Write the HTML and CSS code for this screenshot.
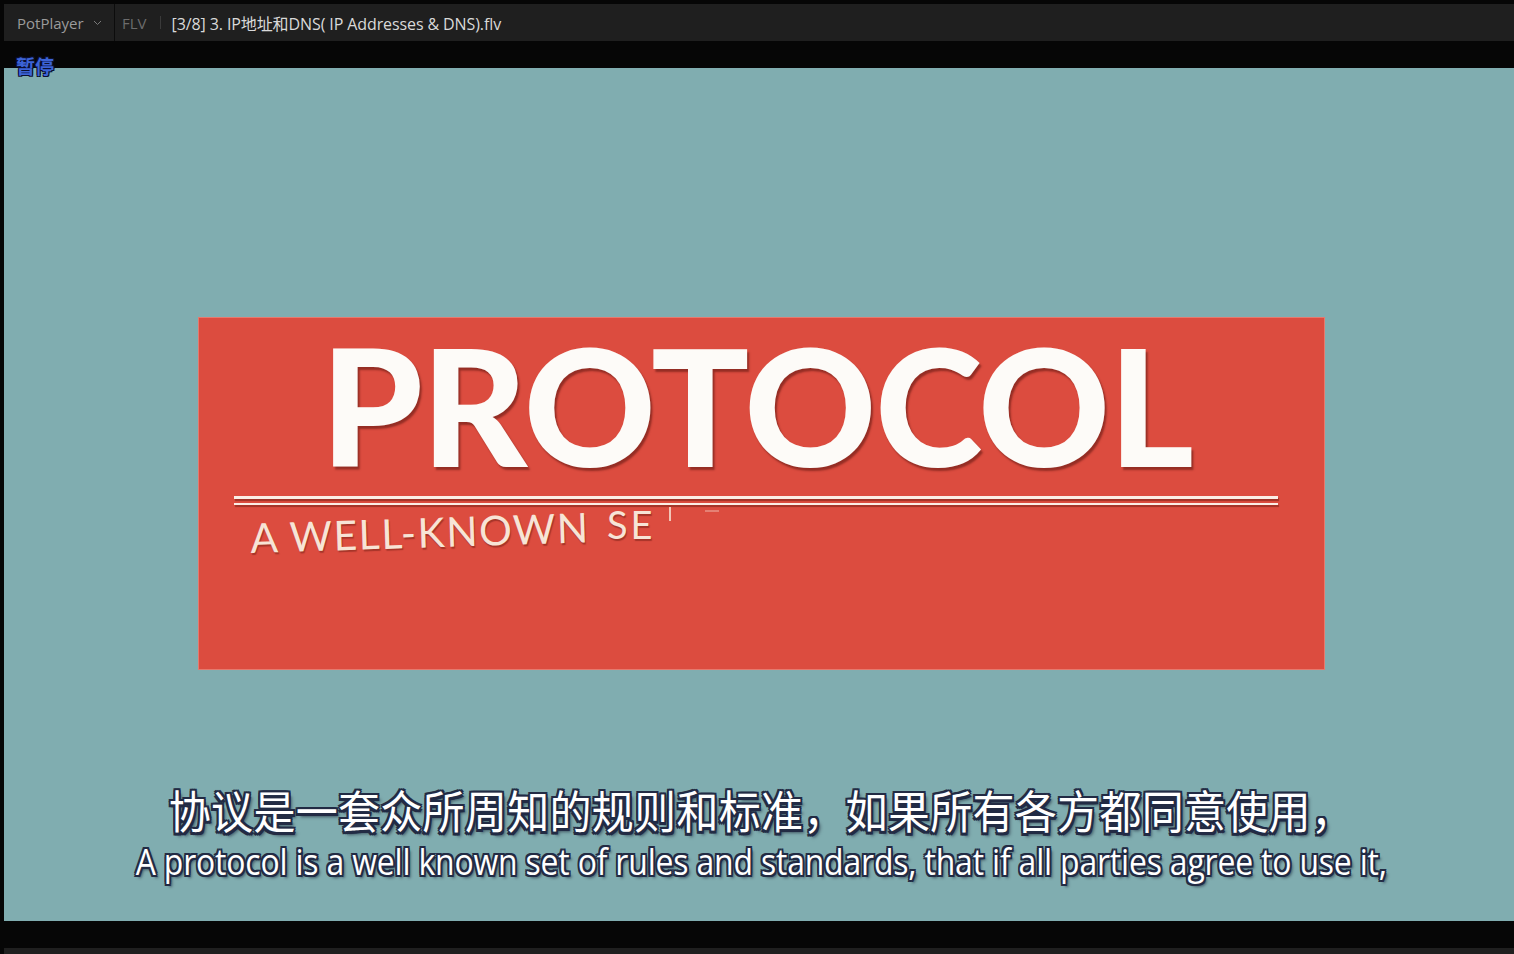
FILE: index.html
```html
<!DOCTYPE html>
<html lang="zh-CN">
<head>
<meta charset="utf-8">
<title>PotPlayer</title>
<link rel="stylesheet" href="styles.css">
</head>
<body>
<div class="app">
  <header class="titlebar">
    <div class="brand">
      <span class="brand-name">PotPlayer</span>
      <svg class="chev" width="9" height="6" viewBox="0 0 9 6"><path d="M1 1 L4.5 4.5 L8 1" fill="none" stroke="#7a7a7a" stroke-width="1"/></svg>
    </div>
    <span class="fmt">FLV</span>
    <span class="sep"></span>
    <span class="file">[3/8] 3. IP地址和DNS( IP Addresses &amp; DNS).flv</span>
  </header>
  <div class="gap"></div>
  <main class="video">
    <span class="osd">暂停</span>
    <section class="card">
      <h1 class="headline">PROTOCOL</h1>
      <div class="rule rule-a"></div>
      <div class="rule rule-b"></div>
      <div class="tagline">
        <span class="tag-main">A WELL-KNOWN</span>
        <span class="tag-se">SE</span>
        <i class="tag-t"></i>
        <i class="tag-dash"></i>
      </div>
    </section>
    <div class="subs">
      <p class="sub-zh">协议是一套众所周知的规则和标准，如果所有各方都同意使用，</p>
      <p class="sub-en"><span>A protocol is a well known set of rules and standards, that if all parties agree to use it,</span></p>
    </div>
  </main>
  <div class="gap"></div>
  <footer class="bottombar"></footer>
</div>
</body>
</html>
```
FILE: styles.css
```css
html, body {
  margin: 0;
  padding: 0;
  background: #060606;
  overflow: hidden;
}
.app {
  width: 1514px;
  height: 954px;
  padding: 4px 0 0 4px;
  box-sizing: border-box;
  display: flex;
  flex-direction: column;
}
.titlebar {
  height: 37px;
  flex: none;
  background: #1f1f1f;
  display: flex;
  align-items: center;
  font-family: "Open Sans", "Noto Sans CJK SC", sans-serif;
  font-size: 15px;
}
.brand {
  height: 100%;
  width: 111px;
  box-sizing: border-box;
  border-right: 1px solid #0c0c0c;
  display: flex;
  align-items: center;
  padding-left: 13px;
  gap: 9px;
  color: #9b9b9b;
}
.chev { margin-top: 1px; }
.fmt {
  margin-left: 7px;
  color: #6c6c6c;
}
.sep {
  width: 1px;
  height: 13px;
  background: #3a3a3a;
  margin: 0 11px 0 13px;
}
.file {
  color: #d9d9d9;
  font-size: 16px;
  letter-spacing: -0.1px;
}
.gap {
  height: 27px;
  flex: none;
}
.video {
  position: relative;
  height: 853px;
  flex: none;
  background: #80adb0;
  display: flex;
  flex-direction: column;
}
.osd {
  position: absolute;
  left: 12px;
  top: -14px;
  font-family: "Noto Sans CJK SC", sans-serif;
  font-size: 19px;
  font-weight: 700;
  color: #3c63d6;
  line-height: 24px;
  text-shadow: 1px 1px 0 #0b1030, -1px -1px 0 #0b1030, 1px -1px 0 #0b1030, -1px 1px 0 #0b1030;
}
.card {
  margin: 249px 0 0 194px;
  width: 1127px;
  height: 353px;
  box-sizing: border-box;
  background: #dc4c3f;
  border: 1px solid #e57a6e;
  display: flex;
  flex-direction: column;
}
.headline {
  margin: 0;
  text-align: center;
  font-family: "Lato", sans-serif;
  font-weight: 900;
  font-size: 163px;
  line-height: 160px;
  height: 160px;
  color: #fdfbf8;
  text-shadow: 2px 3px 2px rgba(90, 20, 15, 0.55);
  letter-spacing: -1.6px;
  padding: 6px 10px 0 0;
  box-sizing: content-box;
}
.rule {
  margin-left: 35px;
  width: 1044px;
  background: #fbeee6;
  box-shadow: 1px 2px 1px rgba(100, 25, 15, 0.5);
}
.rule-a {
  height: 3px;
  margin-top: 12px;
}
.rule-b {
  height: 2px;
  margin-top: 4px;
}
.tagline {
  position: relative;
  margin-left: 52px;
  height: 60px;
  font-family: "Lato", sans-serif;
  color: #f7e4d6;
  text-shadow: 1px 2px 1px rgba(100, 25, 15, 0.45);
}
.tag-main {
  position: absolute;
  left: 0;
  top: 8px;
  font-size: 41px;
  letter-spacing: 1.5px;
  transform: rotate(-1.8deg);
  transform-origin: left bottom;
  white-space: nowrap;
}
.tag-se {
  position: absolute;
  left: 356px;
  top: -4px;
  font-size: 38px;
  letter-spacing: 3px;
}
.tag-t {
  position: absolute;
  left: 418px;
  top: 2px;
  width: 2px;
  height: 14px;
  background: rgba(247, 228, 214, 0.8);
}
.tag-dash {
  position: absolute;
  left: 454px;
  top: 5px;
  width: 14px;
  height: 2px;
  background: rgba(247, 228, 214, 0.35);
}
.subs {
  margin-top: auto;
  margin-bottom: 41px;
  display: flex;
  flex-direction: column;
  align-items: center;
  padding-left: 4px;
}
.sub-zh {
  margin: 0;
  font-family: "Noto Sans CJK SC", sans-serif;
  font-size: 42px;
  line-height: 42px;
  color: #ffffff;
  letter-spacing: 0.3px;
  transform: scaleY(1.08);
  text-shadow:
    2px 0 0 #222b44, -2px 0 0 #222b44, 0 2px 0 #222b44, 0 -2px 0 #222b44,
    2px 2px 0 #222b44, -2px -2px 0 #222b44, 2px -2px 0 #222b44, -2px 2px 0 #222b44,
    3px 3px 3px rgba(20, 25, 45, 0.6);
}
.sub-en {
  margin: 13px 0 0;
  font-family: "Open Sans", sans-serif;
  font-size: 36px;
  line-height: 36px;
  color: #ffffff;
  white-space: nowrap;
}
.sub-en span {
  display: inline-block;
  transform: scaleX(0.887);
  letter-spacing: -0.2px;
  text-shadow:
    2px 0 0 #222b44, -2px 0 0 #222b44, 0 2px 0 #222b44, 0 -2px 0 #222b44,
    2px 2px 0 #222b44, -2px -2px 0 #222b44, 2px -2px 0 #222b44, -2px 2px 0 #222b44,
    3px 3px 3px rgba(20, 25, 45, 0.6);
}
.bottombar {
  height: 6px;
  flex: none;
  background: #1f1f1f;
}
```
